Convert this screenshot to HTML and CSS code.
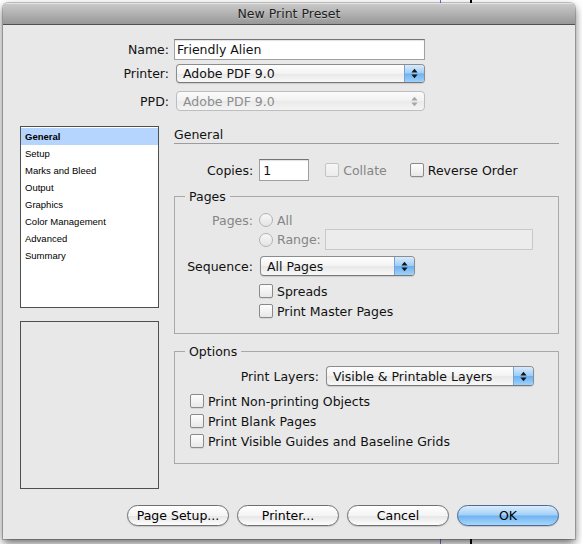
FILE: index.html
```html
<!DOCTYPE html>
<html lang="en">
<head>
    <meta charset="UTF-8">
    <meta name="viewport" content="width=device-width, initial-scale=1.0">
    <title>New Print Preset</title>
    <link rel="stylesheet" href="styles.css">
</head>
<body>
    <div class="window">
        <div class="title-bar">New Print Preset</div>

        <div class="top-form">
            <label class="lbl" for="presetName">Name:</label>
            <input class="text-field name-field" id="presetName" type="text" value="Friendly Alien">

            <span class="lbl gap-top">Printer:</span>
            <div class="popup printer-popup gap-top">
                <span class="popup-text">Adobe PDF 9.0</span>
                <span class="stepper">
                    <svg width="7" height="11" viewBox="0 0 7 11"><path d="M3.5 0.8 L6.6 4.6 H0.4 Z M0.4 6.4 H6.6 L3.5 10.2 Z"/></svg>
                </span>
            </div>

            <span class="lbl gap-top2">PPD:</span>
            <div class="popup popup-disabled ppd-popup gap-top2">
                <span class="popup-text">Adobe PDF 9.0</span>
                <span class="stepper">
                    <svg width="7" height="11" viewBox="0 0 7 11"><path d="M3.5 0.8 L6.6 4.6 H0.4 Z M0.4 6.4 H6.6 L3.5 10.2 Z"/></svg>
                </span>
            </div>
        </div>

        <div class="main">
            <div class="side">
                <ul class="nav-list">
                    <li class="selected">General</li>
                    <li>Setup</li>
                    <li>Marks and Bleed</li>
                    <li>Output</li>
                    <li>Graphics</li>
                    <li>Color Management</li>
                    <li>Advanced</li>
                    <li>Summary</li>
                </ul>
                <div class="preview"></div>
            </div>

            <div class="panel">
                <div class="panel-head">General</div>

                <div class="copies-row">
                    <span>Copies:</span>
                    <input class="text-field copies-field" type="text" value="1">
                    <span class="check disabled collate-box"></span>
                    <span class="dim">Collate</span>
                    <span class="check reverse-box"></span>
                    <span>Reverse Order</span>
                </div>

                <fieldset class="group pages-group">
                    <legend>Pages</legend>
                    <div class="group-body">
                        <div class="prow prow-all">
                            <span class="lbl-cell dim">Pages:</span>
                            <span class="radio"></span>
                            <span class="dim">All</span>
                        </div>
                        <div class="prow prow-range">
                            <span class="lbl-cell"></span>
                            <span class="radio"></span>
                            <span class="dim">Range:</span>
                            <input class="text-field range-field" type="text" disabled>
                        </div>
                        <div class="prow prow-seq">
                            <span class="lbl-cell">Sequence:</span>
                            <div class="popup seq-popup">
                                <span class="popup-text">All Pages</span>
                                <span class="stepper">
                                    <svg width="7" height="11" viewBox="0 0 7 11"><path d="M3.5 0.8 L6.6 4.6 H0.4 Z M0.4 6.4 H6.6 L3.5 10.2 Z"/></svg>
                                </span>
                            </div>
                        </div>
                        <div class="prow prow-spreads">
                            <span class="lbl-cell"></span>
                            <span class="check"></span>
                            <span>Spreads</span>
                        </div>
                        <div class="prow">
                            <span class="lbl-cell"></span>
                            <span class="check"></span>
                            <span>Print Master Pages</span>
                        </div>
                    </div>
                </fieldset>

                <fieldset class="group options-group">
                    <legend>Options</legend>
                    <div class="group-body options-body">
                        <div class="layers-row">
                            <span>Print Layers:</span>
                            <div class="popup layers-popup">
                                <span class="popup-text">Visible &amp; Printable Layers</span>
                                <span class="stepper">
                                    <svg width="7" height="11" viewBox="0 0 7 11"><path d="M3.5 0.8 L6.6 4.6 H0.4 Z M0.4 6.4 H6.6 L3.5 10.2 Z"/></svg>
                                </span>
                            </div>
                        </div>
                        <div class="orow orow-first">
                            <span class="check"></span>
                            <span>Print Non-printing Objects</span>
                        </div>
                        <div class="orow">
                            <span class="check"></span>
                            <span>Print Blank Pages</span>
                        </div>
                        <div class="orow">
                            <span class="check"></span>
                            <span>Print Visible Guides and Baseline Grids</span>
                        </div>
                    </div>
                </fieldset>
            </div>
        </div>

        <div class="buttons">
            <button type="button" class="btn">Page Setup...</button>
            <button type="button" class="btn">Printer...</button>
            <button type="button" class="btn">Cancel</button>
            <button type="button" class="btn btn-default">OK</button>
        </div>
    </div>
</body>
</html>
```

FILE: styles.css
```css
* {
    box-sizing: border-box;
}
body {
    margin: 0;
    padding: 3px 0 0 3px;
    height: 544px;
    overflow: hidden;
    font-family: "DejaVu Sans", sans-serif;
    font-size: 12.5px;
    color: #111;
    background:
        linear-gradient(to right, transparent 440px, #9a5cf0 440px, #9a5cf0 441px, transparent 441px),
        linear-gradient(to right, transparent 470px, #000 470px, #000 472px, transparent 472px),
        #fff;
}
.window {
    width: 572px;
    height: 536px;
    background-color: #e8e8e8;
    border-radius: 5px 5px 0 0;
    box-shadow: 0 0 0 1px rgba(0, 0, 0, 0.2), 0 4px 10px rgba(0, 0, 0, 0.6);
    overflow: hidden;
}
.title-bar {
    height: 22px;
    line-height: 21px;
    text-align: center;
    color: #1e1e1e;
    background: linear-gradient(#cbcbcb, #b2b2b2 50%, #989898);
    border-bottom: 1px solid #505050;
    box-shadow: inset 0 1px 0 #e4e4e4;
    text-shadow: 0 1px 0 rgba(255, 255, 255, 0.35);
}

/* name / printer / ppd */
.top-form {
    display: grid;
    grid-template-columns: 166px 251px;
    column-gap: 5px;
    align-items: center;
    padding-top: 14px;
}
.lbl {
    text-align: right;
}
.gap-top {
    margin-top: 4px;
}
.gap-top2 {
    margin-top: 8px;
}
.text-field {
    height: 21px;
    margin: 0;
    padding: 0 2px;
    font: inherit;
    color: #111;
    background-color: #fff;
    border: 1px solid #a0a0a0;
    border-top-color: #747474;
    box-shadow: inset 0 1px 1px rgba(0, 0, 0, 0.12);
    outline: none;
}
.name-field {
    width: 251px;
}
.popup {
    display: flex;
    align-items: center;
    height: 20px;
    border: 1px solid #8c8c8c;
    border-bottom-color: #777;
    border-radius: 4px;
    background: linear-gradient(#fefefe, #f3f3f3 50%, #e8e8e8 52%, #f8f8f8);
    box-shadow: 0 1px 1px rgba(0, 0, 0, 0.12);
    overflow: hidden;
}
.popup-text {
    flex: 1;
    padding-left: 6px;
    white-space: nowrap;
}
.stepper {
    width: 20px;
    align-self: stretch;
    display: flex;
    align-items: center;
    justify-content: center;
    background: linear-gradient(#d8ebfd, #9fcdf7 48%, #6cb1f2 52%, #9ed2fa);
    border-left: 1px solid #7aa3d4;
}
.stepper svg {
    fill: #151515;
}
.printer-popup {
    height: 19px;
    margin-left: 2px;
}
.popup-disabled {
    border-color: #bdbdbd;
    color: #8d8d8d;
    box-shadow: none;
    background: linear-gradient(#fbfbfb, #f1f1f1 50%, #eaeaea 52%, #f4f4f4);
}
.popup-disabled .stepper {
    background: none;
    border-left: none;
}
.popup-disabled .stepper svg {
    fill: #a6a6a6;
}
.ppd-popup {
    margin-left: 2px;
}

/* main area */
.main {
    display: grid;
    grid-template-columns: 139px 385px;
    column-gap: 15px;
    padding: 0 16px 0 17px;
    margin-top: 15px;
}
.side {
    display: flex;
    flex-direction: column;
    gap: 13px;
}
.nav-list {
    height: 182px;
    margin: 0;
    padding: 1px 0 0;
    list-style: none;
    background-color: #fff;
    border: 1px solid #4f4f4f;
    font-family: "Liberation Sans", sans-serif;
    font-size: 9.5px;
    color: #000;
}
.nav-list li {
    height: 17px;
    line-height: 17px;
    padding-left: 4px;
}
.nav-list .selected {
    background-color: #b5d5ff;
    font-weight: bold;
}
.preview {
    height: 168px;
    border: 1px solid #4f4f4f;
}
.panel-head {
    height: 18px;
    line-height: 17px;
    border-bottom: 1px solid #9c9c9c;
}
.copies-row {
    display: flex;
    align-items: center;
    height: 22px;
    margin-top: 15px;
    padding-left: 33px;
}
.copies-field {
    width: 50px;
    height: 22px;
    margin-left: 6px;
    padding-left: 3px;
}
.collate-box {
    margin-left: 16px;
}
.reverse-box {
    margin-left: 23px;
}
.dim {
    color: #858585;
}
.check, .radio {
    flex: none;
    width: 14px;
    height: 14px;
    margin-right: 4px;
    border: 1px solid #8a8a8a;
    border-radius: 2px;
    background: linear-gradient(#fdfdfd, #e8e8e8);
    box-shadow: 0 1px 0 rgba(0, 0, 0, 0.08);
}
.check.disabled {
    border-color: #c4c4c4;
    background: linear-gradient(#f6f6f6, #ececec);
    box-shadow: none;
}
.radio {
    border-radius: 50%;
    border-color: #b3b3b3;
    background: linear-gradient(#f7f7f7, #e4e4e4);
    box-shadow: none;
}

/* group boxes */
.group {
    margin: 7px 0 0;
    padding: 0;
    min-width: 0;
    border: 1px solid #a9a9a9;
}
.group legend {
    margin-left: 10px;
    padding: 0 4px;
    line-height: 17px;
}
.group-body {
    padding: 6px 0 12px;
}
.prow {
    display: flex;
    align-items: center;
    height: 20px;
}
.prow-all {
    height: 18px;
}
.prow-range {
    height: 21px;
}
.prow-seq {
    margin-top: 6px;
}
.prow-spreads {
    margin-top: 5px;
}
.lbl-cell {
    flex: none;
    width: 78px;
    margin-right: 6px;
    text-align: right;
}
.range-field {
    width: 208px;
    margin-left: 4px;
    background-color: #ececec;
    border-color: #c9c9c9;
    box-shadow: none;
}
.seq-popup {
    width: 155px;
    margin-left: 1px;
}
.options-group {
    margin-top: 9px;
}
.layers-row {
    display: flex;
    justify-content: flex-end;
    align-items: center;
    height: 20px;
    padding-right: 24px;
}
.layers-popup {
    width: 208px;
    margin-left: 7px;
}
.orow {
    display: flex;
    align-items: center;
    height: 20px;
    padding-left: 15px;
}
.orow-first {
    margin-top: 5px;
}

/* buttons */
.buttons {
    display: flex;
    justify-content: flex-end;
    gap: 8px;
    margin-top: 16px;
    padding: 0 16px;
}
.btn {
    width: 102px;
    height: 21px;
    padding: 0;
    font: inherit;
    color: #000;
    border: 1px solid #6f6f6f;
    border-radius: 11px;
    background: linear-gradient(#ffffff, #f4f4f4 50%, #e6e6e6 52%, #fdfdfd);
    box-shadow: 0 1px 1px rgba(0, 0, 0, 0.15);
}
.btn-default {
    border-color: #4b6a94;
    background: linear-gradient(#dcedfd, #a2cff7 48%, #6db2f2 52%, #a9d8fb);
}
```
